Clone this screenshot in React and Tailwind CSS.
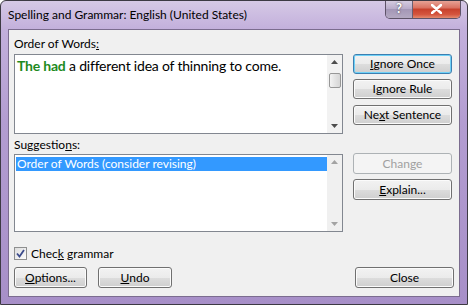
import React from 'react'

const font = { fontFamily: 'Lato, "Open Sans", "Noto Sans", sans-serif' }

// Win7 push button
const Btn = ({ children, className = '', primary, disabled }) => (
  <div
    className={
      'flex items-center justify-center rounded-[3px] border text-[12px] leading-none ' +
      (disabled
        ? 'border-[#adb2b5] bg-[#f4f4f4] text-[#a0a0a0] '
        : primary
        ? 'border-[#3c7fb1] bg-[linear-gradient(#f2f2f2_0%,#ebebeb_50%,#dddddd_50%,#cfcfcf_100%)] text-black shadow-[inset_0_0_0_1px_#6fd1f7] '
        : 'border-[#707070] bg-[linear-gradient(#f2f2f2_0%,#ebebeb_50%,#dddddd_50%,#cfcfcf_100%)] text-black shadow-[inset_0_0_0_1px_#fbfbfb] ') +
      className
    }
  >
    {children}
  </div>
)

const Arrow = ({ up, color = '#4d4d4d' }) => (
  <svg width="7" height="4" viewBox="0 0 7 4">
    <path d={up ? 'M0 4 L3.5 0 L7 4 Z' : 'M0 0 L3.5 4 L7 0 Z'} fill={color} />
  </svg>
)

export default function App() {
  return (
    <div
      style={font}
      className="relative flex h-[305px] w-[468px] flex-col overflow-hidden rounded-t-[6px] border border-[#3d3a44] bg-[linear-gradient(180deg,#d6c9e6_0px,#c3b0dc_28px,#b39dd1_120px,#a78fc8_305px)]"
    >
      {/* Title bar */}
      <div className="flex h-[28px] items-center pl-[7px] text-[12px] text-black">
        Spelling and Grammar: English (United States)
      </div>
      <div className="absolute right-[6px] top-[-1px] flex h-[19px] overflow-hidden rounded-b-[5px] border border-t-0 border-[#5e5368]">
        <div className="flex w-[27px] items-center justify-center border-r border-[#6a6072] bg-[linear-gradient(#d9d0e3,#b8abc9_50%,#a396b6_50%,#b4a9c2)] text-[13px] font-bold text-white [text-shadow:0_0_2px_#333]">
          ?
        </div>
        <div className="flex w-[47px] items-center justify-center bg-[linear-gradient(#e9a99c,#d9705f_45%,#c7402b_50%,#d4553e_80%,#e48a6f)]">
          <svg width="11" height="10" viewBox="0 0 11 10">
            <path d="M1 1 L10 9 M10 1 L1 9" stroke="#fff" strokeWidth="2.6" strokeLinecap="round" />
          </svg>
        </div>
      </div>

      {/* Client area */}
      <div className="mx-[7px] mb-[7px] flex flex-1 flex-col border border-[#7b6c8f] bg-[#f0f0f0] px-[5px] text-[12px] text-black">
        <div className="flex gap-[10px]">
          {/* left column */}
          <div className="flex w-[329px] flex-col">
            <div className="mt-[6px] h-[16px] leading-[16px]">
              Order of Words<span className="underline">:</span>
            </div>
            <div className="mt-[2px] flex h-[80px] border border-[#828790] bg-white">
              <div className="flex-1 pl-[2px] pt-[2px] text-[14px] leading-[18px] tracking-[-0.2px]">
                <span className="font-bold text-[#1e8a1e]">The had</span> a different idea of thinning to come.
              </div>
              <div className="flex w-[15px] flex-col items-center bg-[#f2f2f2] pt-[5px] pb-[5px]">
                <Arrow up />
                <div className="mt-[9px] h-[15px] w-[12px] rounded-[2px] border border-[#979797] bg-[linear-gradient(90deg,#f3f3f3,#e3e3e3_50%,#d6d6d6)]" />
                <div className="flex-1" />
                <Arrow />
              </div>
            </div>
            <div className="mt-[3px] h-[16px] leading-[16px]">
              Suggestio<span className="underline">n</span>s:
            </div>
            <div className="mt-[1px] flex h-[78px] border border-[#828790] bg-white">
              <div className="flex-1 pl-[1px] pt-[2px]">
                <div className="h-[14px] bg-[#3399ff] pl-[1px] leading-[14px] text-white">
                  Order of Words (consider revising)
                </div>
              </div>
              <div className="flex w-[15px] flex-col items-center justify-between bg-[#f0f0f0] py-[5px]">
                <Arrow up color="#a3a3a3" />
                <Arrow color="#a3a3a3" />
              </div>
            </div>
          </div>
          {/* right column */}
          <div className="flex w-[99px] flex-col">
            <Btn primary className="mt-[24px] h-[20px]">
              <span className="underline">I</span>gnore Once
            </Btn>
            <Btn className="mt-[5px] h-[20px]">
              I<span className="underline">g</span>nore Rule
            </Btn>
            <Btn className="mt-[6px] h-[20px]">
              Ne<span className="underline">x</span>t Sentence
            </Btn>
            <Btn disabled className="mt-[28px] h-[21px]">
              Change
            </Btn>
            <Btn className="mt-[5px] h-[21px]">
              <span className="underline">E</span>xplain...
            </Btn>
          </div>
        </div>

        {/* check grammar */}
        <div className="mt-[15px] flex h-[13px] items-center gap-[4px]">
          <div className="flex h-[13px] w-[13px] items-center justify-center border border-[#8e8f8f] bg-[linear-gradient(135deg,#dcdcdc,#fdfdfd)]">
            <svg width="9" height="9" viewBox="0 0 9 9">
              <path d="M1 4.5 L3.5 7.5 L8 1" fill="none" stroke="#3b4b8c" strokeWidth="1.8" />
            </svg>
          </div>
          <span>
            Chec<span className="underline">k</span> grammar
          </span>
        </div>

        {/* bottom buttons */}
        <div className="mt-[7px] flex">
          <Btn className="h-[21px] w-[73px]">
            <span className="underline">O</span>ptions...
          </Btn>
          <Btn className="ml-[11px] h-[21px] w-[74px]">
            <span className="underline">U</span>ndo
          </Btn>
          <div className="flex-1" />
          <Btn className="h-[21px] w-[99px]">Close</Btn>
        </div>
      </div>
    </div>
  )
}
